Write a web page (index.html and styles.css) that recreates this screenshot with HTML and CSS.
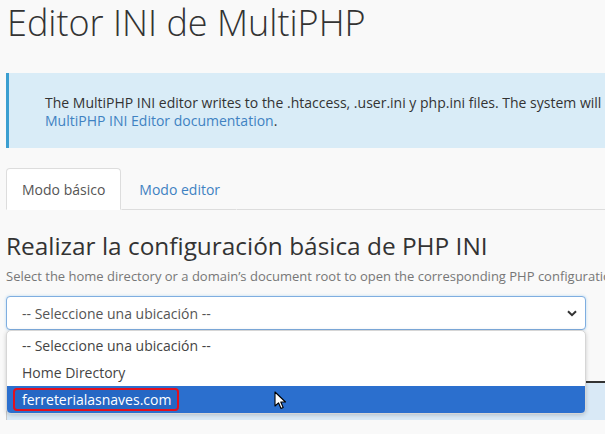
FILE: index.html
```html
<!DOCTYPE html>
<html lang="es">
<head>
<meta charset="utf-8">
<link rel="stylesheet" href="styles.css">
</head>
<body>
<div class="page">
  <h1 class="title">Editor INI de MultiPHP</h1>
  <div class="info">
    <p>The MultiPHP INI editor writes to the .htaccess, .user.ini y php.ini files. The system will automatically update these files.</p>
    <p><a href="#" class="link">MultiPHP INI Editor documentation</a>.</p>
  </div>
  <div class="tabs">
    <div class="tab active">Modo básico</div>
    <div class="tab">Modo editor</div>
    <div class="tab-rest"></div>
  </div>
  <h2 class="heading">Realizar la configuración básica de PHP INI</h2>
  <p class="sub">Select the home directory or a domain’s document root to open the corresponding PHP configuration.</p>
  <div class="select-wrap">
    <div class="select">
      <span>-- Seleccione una ubicación --</span>
      <svg class="chev" width="10" height="7" viewBox="0 0 10 7"><path d="M1 1.2 L5 5.2 L9 1.2" fill="none" stroke="#333" stroke-width="2"/></svg>
    </div>
    <div class="table">
      <div class="thead"></div>
      <div class="row"></div>
    </div>
    <ul class="dropdown">
      <li class="opt">-- Seleccione una ubicación --</li>
      <li class="opt">Home Directory</li>
      <li class="opt sel"><span class="mark">ferreterialasnaves.com</span></li>
    </ul>
    <svg class="cursor" width="14" height="20" viewBox="0 0 14 20"><path d="M1 1 L1 15 L4.5 11.8 L7 17.5 L9.2 16.5 L6.8 11 L11.5 11 Z" fill="#fff" stroke="#000" stroke-width="1.1" stroke-linejoin="round"/></svg>
  </div>
</div>
</body>
</html>
```
FILE: styles.css
```css
* { box-sizing: border-box; }
html, body { margin: 0; padding: 0; }
body {
  background: #f9f9f9;
  font-family: "Open Sans", "Noto Sans", sans-serif;
  color: #333;
  width: 605px;
  height: 434px;
  overflow: hidden;
}
.page { padding: 0 0 0 6px; }
.title {
  margin: 0;
  padding: 0 0 0 1px;
  font-weight: 300;
  font-size: 36px;
  line-height: 46px;
  color: #333;
  white-space: nowrap;
}
.info {
  margin-top: 27px;
  height: 75px;
  background: #d9ecf7;
  border-left: 3px solid #3b9fd1;
  padding: 21px 0 0 36px;
  font-size: 14px;
  line-height: 18px;
  color: #333;
  white-space: nowrap;
  overflow: hidden;
}
.info p { margin: 0; }
.link { color: #3f82c2; text-decoration: none; }
.tabs {
  display: flex;
  margin-top: 20px;
  height: 42px;
}
.tab {
  padding: 0 16px 0 17px;
  font-size: 14px;
  line-height: 41px;
  color: #3f82c2;
  border: 1px solid transparent;
  border-bottom: 1px solid #ddd;
}
.tab.active {
  padding: 0 15px;
  background: #fff;
  color: #555;
  border: 1px solid #ddd;
  border-bottom-color: #fff;
  border-radius: 4px 4px 0 0;
}
.tab-rest { flex: 1; border-bottom: 1px solid #ddd; }
.heading {
  margin: 20px 0 0 0;
  font-weight: 400;
  font-size: 24.4px;
  line-height: 32px;
  color: #333;
  white-space: nowrap;
}
.sub {
  margin: 5px 0 0 0;
  font-size: 13px;
  line-height: 18px;
  color: #777;
  white-space: nowrap;
  overflow: hidden;
}
.select-wrap {
  position: relative;
  margin-top: 11px;
}
.select {
  width: 580px;
  height: 34px;
  background: #fff;
  border: 1px solid #7faee0;
  border-radius: 4px;
  box-shadow: 0 0 3px rgba(102,175,233,0.45);
  display: flex;
  align-items: center;
  justify-content: space-between;
  padding: 0 8px 0 15px;
  font-size: 14px;
  color: #555;
}
.chev { margin-top: 1px; }
.table {
  margin-top: 51px;
}
.thead { height: 2px; background: #333; }
.row {
  height: 37px;
  background: #d9e9f6;
  border-left: 1px solid #c8c8c8;
}
.dropdown {
  position: absolute;
  left: 0;
  top: 34px;
  width: 580px;
  margin: 0;
  padding: 0;
  list-style: none;
  background: #fff;
  border: 1px solid #d6d6d6;
  border-radius: 5px;
  box-shadow: 0 1px 4px rgba(0,0,0,0.18);
  overflow: hidden;
  font-size: 14px;
  color: #444;
}
.opt {
  height: 27px;
  line-height: 27px;
  padding-left: 15px;
}
.opt:first-child { height: 28px; line-height: 29px; }
.opt.sel {
  background: #2b6fce;
  color: #fff;
  padding-left: 6px;
  display: flex;
  align-items: center;
}
.mark {
  display: inline-block;
  border: 2px solid #e2101d;
  border-radius: 4px;
  padding: 0 6px 0 7px;
  line-height: 19px;
  background: #2567c4;
}
.cursor {
  position: absolute;
  left: 268px;
  top: 95px;
}
```
